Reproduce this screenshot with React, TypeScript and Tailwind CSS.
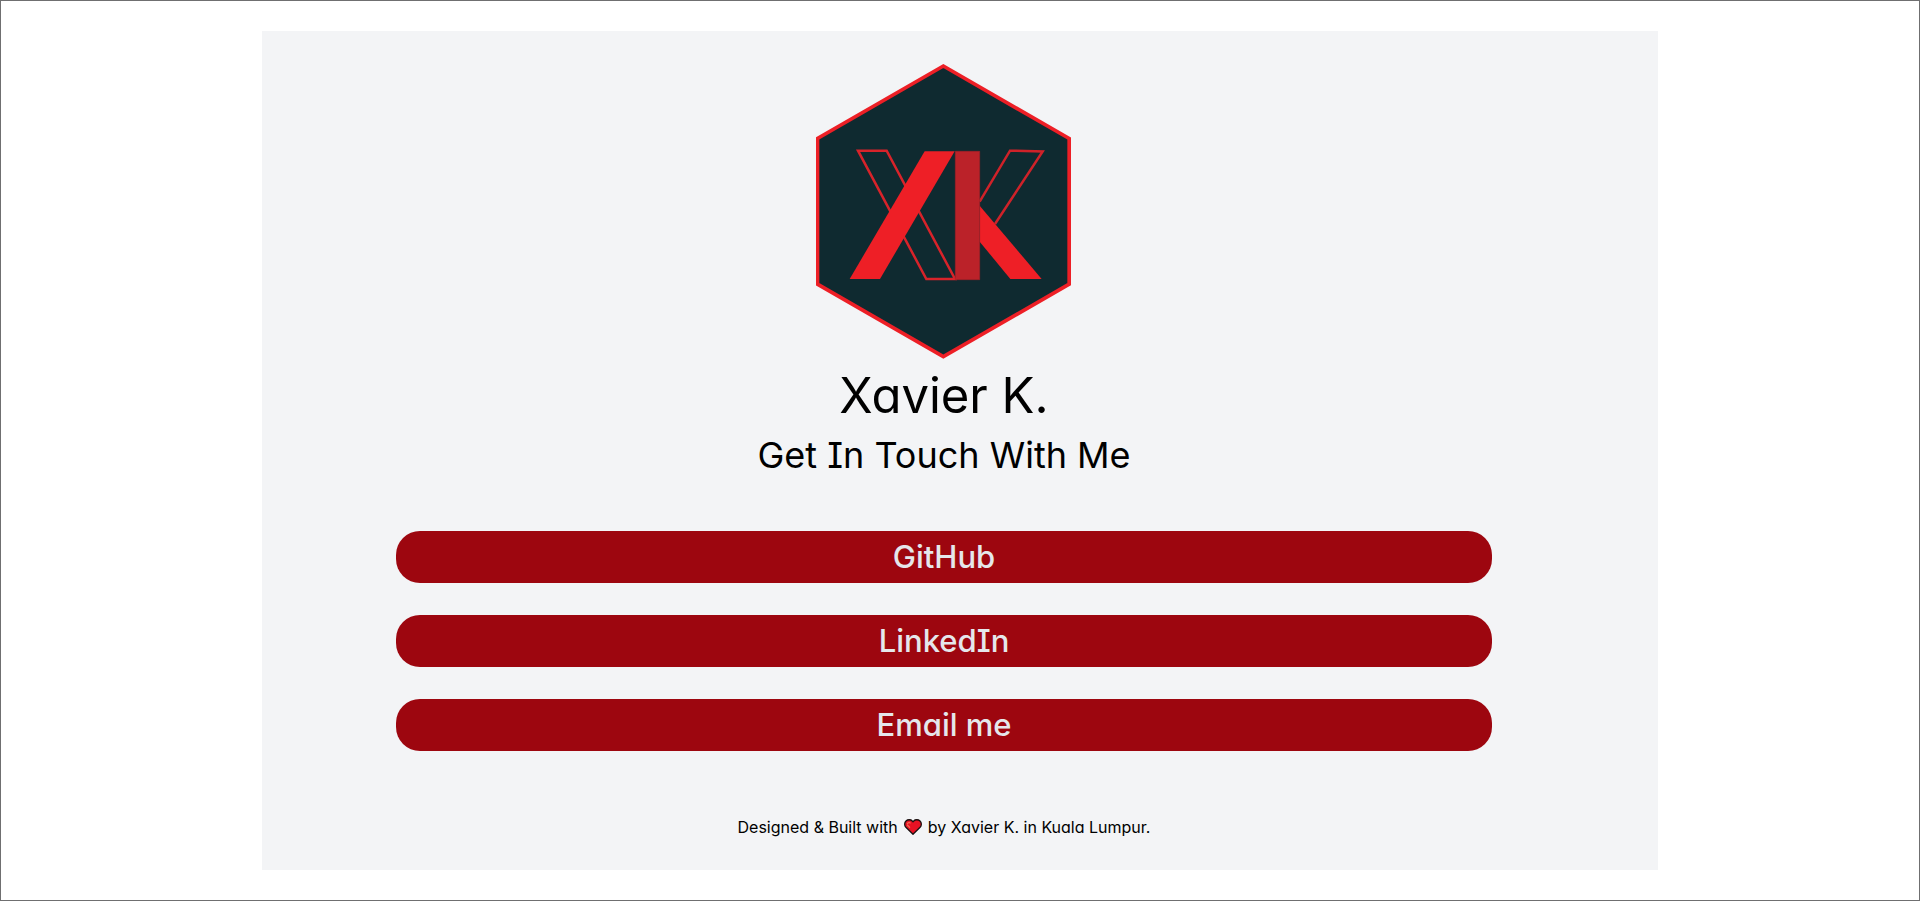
const links = [
  { label: "GitHub", href: "#github" },
  { label: "LinkedIn", href: "#linkedin" },
  { label: "Email me", href: "#email" },
];

function Logo() {
  return (
    <svg
      role="img"
      aria-label="XK logo"
      viewBox="48 38 768 888"
      className="h-[296px] w-64"
      fill="none"
      stroke="#ed1f26"
    >
      <path
        d="M430 47 L807.5 264.5 V701.500 L430 919 L52.500 701.500 V264.500 Z"
        fill="#0f2a30"
        strokeWidth="11"
      />
      <path d="M174 301 H260 L465 686 H379 Z" stroke="#d8232a" strokeWidth="7.500" />
      <path d="M539 454 L630 301 L728 303.500 L585 521" stroke="#cf2229" strokeWidth="7.500" />
      <path d="M149 686 L374 303 H464 L240 686 Z" fill="#ee1f26" stroke="none" />
      <path d="M539 466 L725 686 H631 L539 574 Z" fill="#ee1f26" stroke="none" />
      <path d="M466 303 H539 V688 H466 Z" fill="#bb2229" stroke="#a32027" strokeWidth="2" />
    </svg>
  );
}

function Heart() {
  return (
    <svg
      role="img"
      aria-label="love"
      viewBox="0 0 18 16"
      className="h-4 w-[18px]"
    >
      <path
        d="M9 15.200 L1.900 8.300 C0.200 6.500 0.300 3.600 2 2 C3.800 0.300 6.800 0.400 8.300 2 L9 2.700 L9.700 2 C11.200 0.400 14.200 0.300 16 2 C17.700 3.600 17.800 6.500 16.100 8.300 Z"
        fill="#e81224"
        stroke="#1a1010"
        strokeWidth="1.300"
        strokeLinejoin="round"
      />
      <path
        d="M3.400 4.700 C4 3.400 5.300 3.200 6.200 3.900 M3.600 6.200 L5.600 8.200"
        fill="none"
        stroke="#f4664f"
        strokeWidth="1.300"
        strokeLinecap="round"
      />
    </svg>
  );
}

export default function App() {
  return (
    <div className="flex min-h-screen items-center justify-center border border-[#6f6f70] bg-white font-['Inter',sans-serif] text-black [font-feature-settings:'cv08','cv11']">
      <main className="flex w-full max-w-[1396px] flex-col items-center bg-gray-100 pt-8 pr-[166px] pb-[31px] pl-[134px]">
        <Logo />
        <h1 className="mt-3 text-[49px] leading-[50px]">Xavier K.</h1>
        <h2 className="mt-3.5 text-4xl leading-10">Get In Touch With Me</h2>
        <nav className="mt-14 flex w-full flex-col gap-8">
          {links.map((link) => (
            <a
              key={link.label}
              href={link.href}
              className="rounded-3xl bg-[#9d060f] py-2 text-center text-[31px] leading-9 font-medium text-gray-200"
            >
              {link.label}
            </a>
          ))}
        </nav>
        <footer className="mt-16 flex items-center gap-1.5 text-base">
          <span>Designed &amp; Built with</span>
          <Heart />
          <span>by Xavier K. in Kuala Lumpur.</span>
        </footer>
      </main>
    </div>
  );
}
